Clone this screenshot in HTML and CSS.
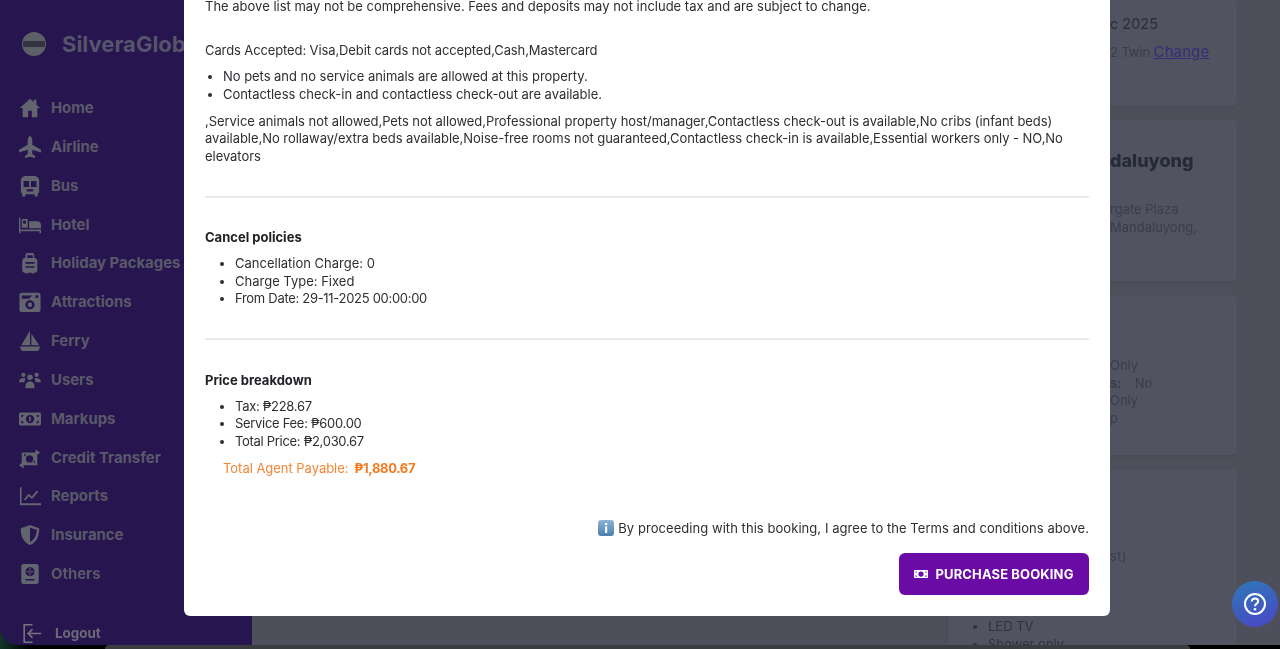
FILE: index.html
```html
<!DOCTYPE html>
<html lang="en">
<head>
<meta charset="utf-8">
<title>Booking</title>
<link rel="stylesheet" href="styles.css">
</head>
<body>
<div class="screen">
  <aside class="sidebar">
    <div class="brand">
      <svg class="logo" viewBox="0 0 24 24"><circle cx="12" cy="12" r="12" fill="#5d6067"/><rect x="1" y="9" width="22" height="6" rx="1" fill="#33343f"/></svg>
      <span class="brand-name">SilveraGlobal</span>
    </div>
    <nav class="nav">
      <a class="nav-item"><svg viewBox="0 0 24 24"><path d="M12 2 1 12h3v10h6v-7h4v7h6V12h3l-4-3.6V3h-3v2.7z"/></svg>Home</a>
      <a class="nav-item"><svg viewBox="0 0 24 24"><path d="M12 0c1.300 0 2.500 2.500 2.500 5v4.500L24 15v3l-9.500-3v4.500l3 2.200V24L12 22.500 6.500 24v-2.300l3-2.200V15L0 18v-3l9.500-5.500V5C9.500 2.500 10.700 0 12 0z"/></svg>Airline</a>
      <a class="nav-item"><svg viewBox="0 0 24 24"><path fill-rule="evenodd" d="M8 1h8c3.500 0 6 2 6 5v12c0 1-.5 1.800-1.500 2.200v2.300c0 .5-.4 1-1 1H18c-.6 0-1-.5-1-1V21H7v1.500c0 .5-.4 1-1 1H4.500c-.6 0-1-.5-1-1v-2.300C2.500 19.800 2 19 2 18V6c0-3 2.500-5 6-5zM5 6.500V13h6V6.500zm8 0V13h6V6.500zM8.500 15.500V18h7v-2.500z"/></svg>Bus</a>
      <a class="nav-item"><svg viewBox="0 0 24 24"><path fill-rule="evenodd" d="M0 4h1.500v13H24v4h-1.700v-2.200H1.500V21H0zM3 5.500h6.500V15H3zM4.500 7v2.500a1.500 1.500 0 0 0 3 0V7zM11 8h9c2.300 0 4 1.700 4 4v3.500H11z"/></svg>Hotel</a>
      <a class="nav-item"><svg viewBox="0 0 24 24"><path fill-rule="evenodd" d="M9.500 1h5c1 0 2 1 2 2v3.500h.5c1.800 0 3 1.500 3 3.500v9.500c0 1.800-1.200 3-3 3h-.5v1h-2.500v-1h-4.500v1H7v-1h-.5c-1.800 0-3-1.200-3-3V10c0-2 1.200-3.500 3-3.500H7V3c0-1 1.500-2 2.500-2zm-.5 2.500v3h6v-3zM7 11v1.800h10V11zm0 4.500v1.800h10v-1.800z"/></svg>Holiday Packages</a>
      <a class="nav-item"><svg viewBox="0 0 24 24"><path fill-rule="evenodd" d="M3 2h18c1.500 0 2.500 1 2.500 2.500v16c0 1.500-1 2.500-2.500 2.500H3c-1.500 0-2.500-1-2.500-2.500v-16C.500 3 1.500 2 3 2zM3 5v3.500h8L14.500 5zM12 10a5 5 0 1 0 0 10 5 5 0 0 0 0-10zm0 2.500a2.500 2.500 0 1 1 0 5 2.500 2.500 0 0 1 0-5zM18 4.500v3h3v-3z"/></svg>Attractions</a>
      <a class="nav-item"><svg viewBox="0 0 24 24"><path d="M12 .5v16H2.500zM13.500 4 22 16.500h-8.500zM1 18h22l-1 3c-.3 1-1 2-2.500 2h-15C3 23 2.300 22 2 21z"/></svg>Ferry</a>
      <a class="nav-item"><svg viewBox="0 0 24 24"><circle cx="12" cy="9" r="3"/><circle cx="4.800" cy="6.500" r="2.300"/><circle cx="19.200" cy="6.500" r="2.300"/><path d="M0 14.500c0-2.500 1.500-4.500 4-4.500h2c.5 0 1 .1 1.400.4C6.500 11.500 6 13 6 14.500zM24 14.500c0-2.500-1.500-4.500-4-4.500h-2c-.5 0-1 .1-1.400.4 1 1.100 1.400 2.600 1.400 4.100zM7 19.500c0-3.500 2-6 4.500-6h1c2.500 0 4.500 2.500 4.500 6 0 .8-.5 1.500-1.200 1.500H8.200C7.500 21 7 20.300 7 19.500z"/></svg>Users</a>
      <a class="nav-item"><svg viewBox="0 0 24 24"><path fill-rule="evenodd" d="M1.500 5h21c.8 0 1.500.7 1.500 1.500v11c0 .8-.7 1.500-1.500 1.500h-21C.7 19 0 18.300 0 17.500v-11C0 5.700.7 5 1.500 5zM12 7.500a4.500 4.500 0 1 0 0 9 4.500 4.500 0 0 0 0-9zM2.500 7.500v2.500A2.500 2.500 0 0 0 5 7.500zm19 0H19a2.500 2.500 0 0 0 2.500 2.500zm-19 9H5A2.500 2.500 0 0 0 2.500 14zm19 0V14A2.500 2.500 0 0 0 19 16.500zM11 9.500h1.800v5H11z"/></svg>Markups</a>
      <a class="nav-item"><svg viewBox="0 0 24 24"><path fill-rule="evenodd" d="M3 6h15V2.500L23 6l-3 2.500V20H5v3.500L0 20l3-2.500zM11.500 9a4 4 0 1 0 0 8 4 4 0 0 0 0-8zM5.500 8v2.500L8 8zm12 9v-2.500L15 17z"/></svg>Credit Transfer</a>
      <a class="nav-item"><svg viewBox="0 0 24 24"><path d="M1 2.500h1.800V20H24v2H1zM5.500 15.500l5-6 3.500 3 5.500-6.500 1.500 1.300-6.800 8-3.500-3-3.800 4.500z"/></svg>Reports</a>
      <a class="nav-item"><svg viewBox="0 0 24 24"><path fill-rule="evenodd" d="M12 1 22 4.500c.2 8.500-2.500 15-10 18.500C4.500 19.500 1.800 13 2 4.500zm0 3v15.500c5-2.800 7.300-7.500 7.300-13.300z"/></svg>Insurance</a>
      <a class="nav-item"><svg viewBox="0 0 24 24"><path fill-rule="evenodd" d="M5 1h14c1.400 0 2.500 1.100 2.500 2.500v17c0 1.400-1.100 2.500-2.500 2.500H5c-1.400 0-2.500-1.100-2.500-2.500v-17C2.500 2.100 3.600 1 5 1zm7 3.500a5 5 0 1 0 0 10 5 5 0 0 0 0-10zm-3.800 4.500v1h7.600V9zM11.500 5.500v8h1v-8zM7 17.500v1.500h10v-1.500z"/></svg>Others</a>
    </nav>
    <a class="logout"><svg viewBox="0 0 24 24"><path d="M12 2H2.500v20H12M22 12H7M12 7l-5 5 5 5"/></svg>Logout</a>
  </aside>

  <main class="main">
    <section class="card card-one">
      <p class="date">c 2025</p>
      <p class="room">2 Twin <a class="change">Change</a></p>
    </section>
    <section class="card card-two">
      <h3 class="hotel-name">daluyong</h3>
      <p class="address">rgate Plaza<br>Mandaluyong,</p>
    </section>
    <section class="card card-three">
      <p class="facts">Only</p>
      <p class="facts"><b>s:</b><span class="fact-val">No</span></p>
      <p class="facts">Only</p>
      <p class="facts">p</p>
    </section>
    <section class="card card-four">
      <p class="facts">st)</p>
      <ul class="amenities"><li>LED TV</li><li>Shower only</li></ul>
    </section>
  </main>

  <div class="laptop-edge"></div>

  <div class="modal">
    <p class="line-top">The above list may not be comprehensive. Fees and deposits may not include tax and are subject to change.</p>
    <p class="cards-line">Cards Accepted: Visa,Debit cards not accepted,Cash,Mastercard</p>
    <ul class="list list-narrow">
      <li>No pets and no service animals are allowed at this property.</li>
      <li>Contactless check-in and contactless check-out are available.</li>
    </ul>
    <p class="policy">,Service animals not allowed,Pets not allowed,Professional property host/manager,Contactless check-out is available,No cribs (infant beds) available,No rollaway/extra beds available,Noise-free rooms not guaranteed,Contactless check-in is available,Essential workers only - NO,No elevators</p>
    <hr class="rule">
    <h4 class="section-title">Cancel policies</h4>
    <ul class="list">
      <li>Cancellation Charge: 0</li>
      <li>Charge Type: Fixed</li>
      <li class="numeric">From Date: 29-11-2025 00:00:00</li>
    </ul>
    <hr class="rule">
    <h4 class="section-title">Price breakdown</h4>
    <ul class="list">
      <li class="numeric">Tax: ₱228.67</li>
      <li class="numeric">Service Fee: ₱600.00</li>
      <li class="numeric">Total Price: ₱2,030.67</li>
    </ul>
    <p class="payable">Total Agent Payable: <b>₱1,880.67</b></p>
    <p class="agree"><svg class="info" viewBox="0 0 16 16"><defs><linearGradient id="infoFill" x1="0" y1="0" x2="0" y2="1"><stop offset="0" stop-color="#8fb4d6"/><stop offset="1" stop-color="#4a7fb0"/></linearGradient></defs><rect width="16" height="16" rx="3" fill="url(#infoFill)"/><rect x="7" y="3" width="2.200" height="2.200" fill="#fff"/><rect x="7" y="6.500" width="2.200" height="6.500" fill="#fff"/></svg>By proceeding with this booking, I agree to the Terms and conditions above.</p>
    <div class="actions">
      <button class="purchase"><svg viewBox="0 0 24 24"><path fill="#fff" fill-rule="evenodd" d="M1.500 5h21c.8 0 1.500.7 1.500 1.500v11c0 .8-.7 1.500-1.500 1.500h-21C.7 19 0 18.300 0 17.500v-11C0 5.700.7 5 1.500 5zM12 7.500a4.500 4.500 0 1 0 0 9 4.500 4.500 0 0 0 0-9zM2.500 7.500v2.500A2.500 2.500 0 0 0 5 7.500zm19 0H19a2.500 2.500 0 0 0 2.500 2.500zm-19 9H5A2.500 2.500 0 0 0 2.500 14zm19 0V14A2.500 2.500 0 0 0 19 16.500z"/></svg>PURCHASE BOOKING</button>
    </div>
  </div>

  <button class="help" aria-label="Help"><svg viewBox="0 0 24 24"><circle cx="12" cy="12" r="10" fill="none" stroke="#fff" stroke-width="2"/><path d="M8.800 9.500c0-1.900 1.400-3.100 3.200-3.100s3.200 1.100 3.200 2.800c0 2.400-3.200 2.500-3.200 5" fill="none" stroke="#fff" stroke-width="2"/><circle cx="12" cy="17.300" r="1.300" fill="#fff"/></svg></button>
</div>
</body>
</html>
```
FILE: styles.css
```css
* { box-sizing: border-box; }
html, body { margin: 0; height: 100%; }
body { overflow: hidden; background: #000; font-family: "Inter", "Liberation Sans", sans-serif; }
p, h3, h4, ul { margin: 0; }

.screen { position: relative; width: 1280px; height: 649px; overflow: hidden; display: flex; background: linear-gradient(90deg, #12352a, #000 30px); }

.sidebar { width: 252px; height: 645px; flex: none; background: #27154f; border-bottom-left-radius: 18px; padding: 30px 0 0 19px; display: flex; flex-direction: column; overflow: hidden; filter: blur(.4px); }
.brand { display: flex; align-items: center; gap: 16px; height: 28px; padding-left: 3px; white-space: nowrap; }
.logo { width: 24px; height: 24px; flex: none; }
.brand-name { font-size: 22px; font-weight: 700; color: #55546a; }
.nav { display: flex; flex-direction: column; margin-top: 30.600px; }
.nav-item { display: flex; align-items: center; gap: 10px; height: 38.85px; font-size: 14.900px; font-weight: 700; color: #595969; white-space: nowrap; }
.nav-item svg { width: 22px; height: 22px; flex: none; fill: #62656f; }
.logout { display: flex; align-items: center; gap: 12px; margin-top: auto; height: 24px; padding-left: 3px; font-size: 13.400px; font-weight: 700; color: #6a6a78; }
.logout svg { width: 21px; height: 21px; fill: none; stroke: #74747f; stroke-width: 1.800; }

.main { flex: 1; height: 645px; background: #4d505b; padding: 0 43px 0 696px; display: flex; flex-direction: column; gap: 14px; overflow: hidden; font-size: 13px; color: #2f3240; filter: blur(.4px); }
.card { background: #515460; border-radius: 4px; padding-left: 162px; box-shadow: 0 1px 3px rgba(0,0,0,.08); flex: none; }
.card-one { height: 106px; padding-top: 15px; }
.date { font-size: 14.500px; line-height: 18px; color: #2a2d3a; }
.room { margin-top: 10px; line-height: 18px; white-space: nowrap; color: #3a3d4a; letter-spacing: -.1px; }
.change { color: #3a2c78; text-decoration: underline; font-size: 15px; margin-left: 0; letter-spacing: .1px; }
.card-two { height: 161px; padding-top: 28px; }
.hotel-name { font-size: 18px; line-height: 26px; font-weight: 800; color: #262a38; }
.address { margin-top: 27px; line-height: 17.600px; color: #3a3d4a; }
.card-three { height: 160px; padding-top: 62px; }
.facts { line-height: 17.600px; color: #3a3d4a; white-space: nowrap; }
.fact-val { margin-left: 13px; }
.card-four { height: 200px; padding-top: 79px; position: relative; letter-spacing: .3px; }
.amenities { position: absolute; left: 22px; top: 149px; padding-left: 18px; line-height: 17.600px; color: #2f3240; letter-spacing: 0; }

.laptop-edge { position: absolute; left: 105px; right: 90px; bottom: 0; height: 4px; background: #3b3c40; border-top-left-radius: 10px; border-top-right-radius: 10px; }

.modal { position: absolute; left: 184px; top: 0; width: 926px; height: 616px; background: #fff; border-bottom-left-radius: 6px; border-bottom-right-radius: 6px; padding: 0 21px; font-size: 13px; line-height: 17.600px; color: #2e2e33; overflow: hidden; filter: blur(.2px); }
.line-top { margin-top: -2px; white-space: nowrap; }
.cards-line { margin-top: 26.500px; letter-spacing: -.11px; }
.list { padding-left: 30px; margin-top: 8.500px; }
.list-narrow { padding-left: 18px; letter-spacing: -.04px; }
.numeric { letter-spacing: -.3px; }
.policy { margin-top: 9.500px; letter-spacing: -.05px; }
.rule { border: 0; height: 2px; background: #e9e9ea; margin: 30px 0 0; }
.section-title { font-size: 13px; font-weight: 700; color: #212126; line-height: 17.600px; margin-top: 31.500px; }
.payable { margin: 9.500px 0 0 18px; color: #f58634; letter-spacing: -.03px; }
.payable b { margin-left: 2px; color: #f47a1f; letter-spacing: -.35px; }
.agree { margin-top: 42px; display: flex; justify-content: flex-end; align-items: center; gap: 4px; white-space: nowrap; letter-spacing: .055px; }
.info { width: 16px; height: 16px; flex: none; }
.actions { display: flex; justify-content: flex-end; margin-top: 16px; }
.purchase { width: 190px; height: 42px; border: 0; border-radius: 6px; background: #6a0ba5; color: #fff; font: 700 13px "Inter", "Liberation Sans", sans-serif; letter-spacing: .12px; display: flex; align-items: center; justify-content: center; gap: 7px; white-space: nowrap; }
.purchase svg { width: 14px; height: 14px; flex: none; }

.help { position: absolute; left: 1232px; top: 581px; width: 46px; height: 46px; border: 0; padding: 11px; border-radius: 50%; background: linear-gradient(160deg, #2f78b8, #4a46c6); }
.help svg { display: block; width: 24px; height: 24px; }
```
